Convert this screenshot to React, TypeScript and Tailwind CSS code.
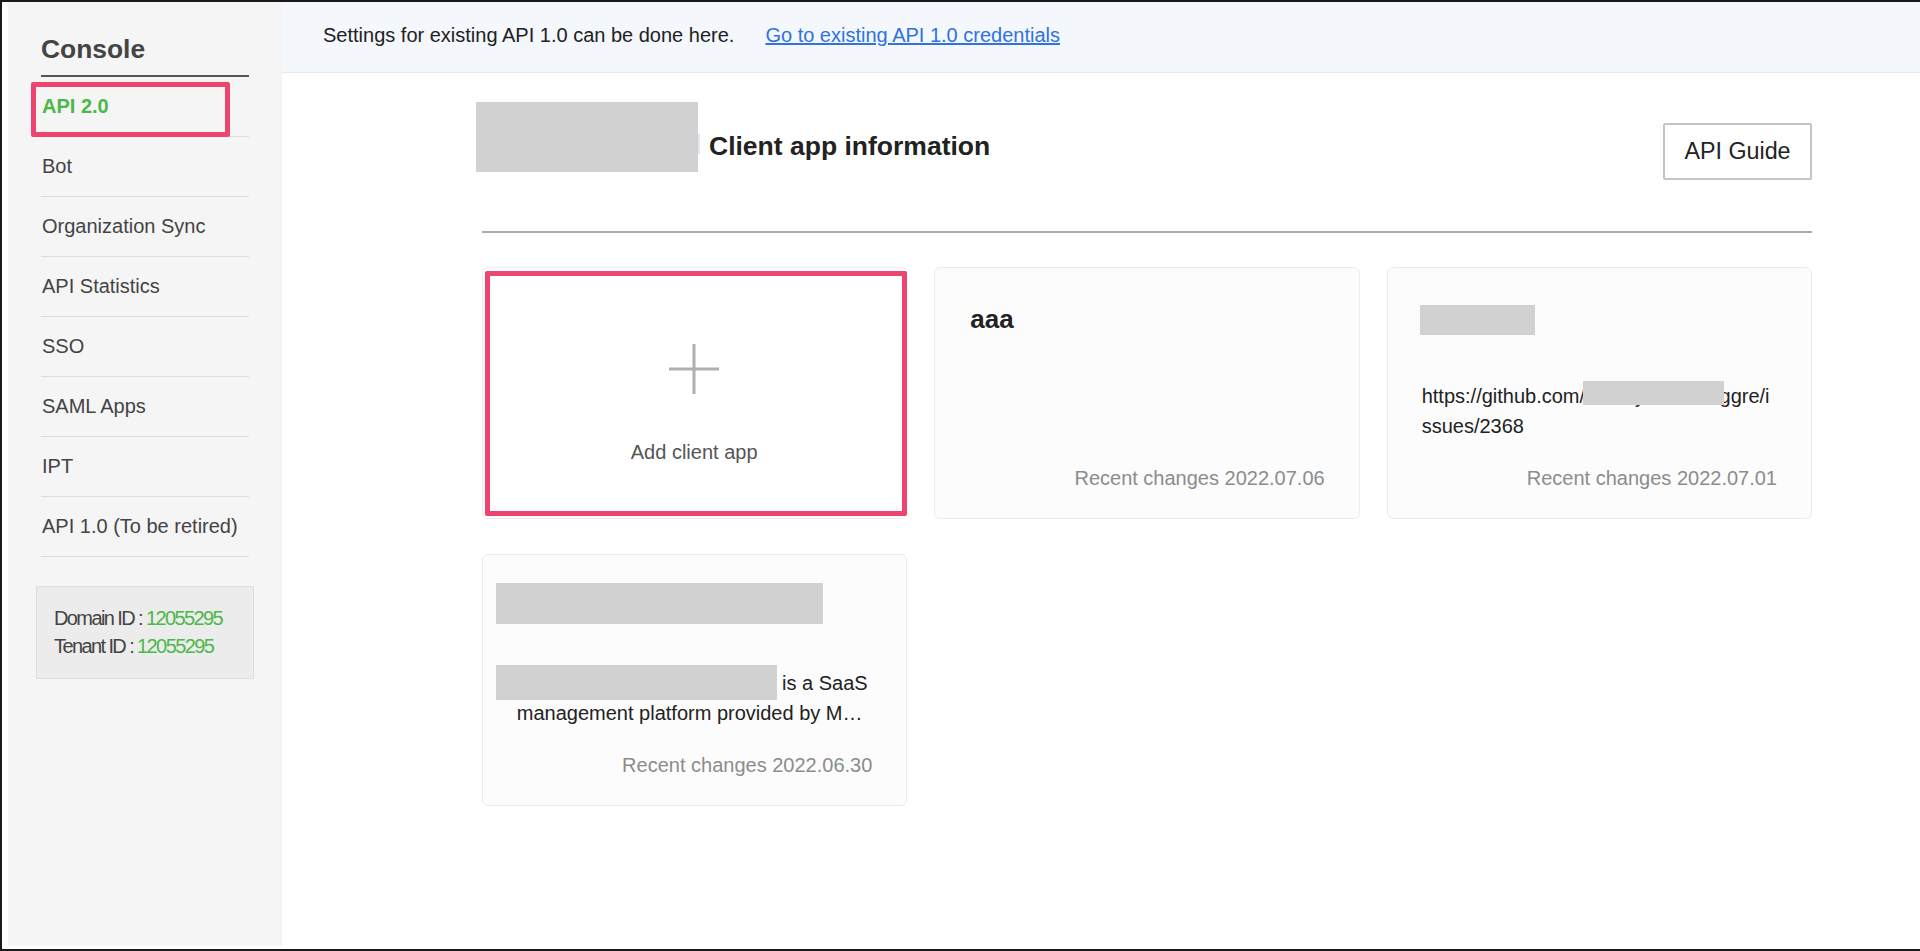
const font = "font-['Liberation_Sans',Arial,sans-serif]";

const navItems = ['API 2.0', 'Bot', 'Organization Sync', 'API Statistics', 'SSO', 'SAML Apps', 'IPT', 'API 1.0 (To be retired)'];

function Sidebar() {
  return (
    <aside className="w-[274px] shrink-0 bg-[#f5f5f5] px-[33px] pt-[29px]">
      <h1 className="mb-0 border-b-2 border-[#555] pb-[7px] text-[26.4px] leading-[37px] font-bold text-[#444]">Console</h1>
      <ul>
        {navItems.map((item, i) => (
          <li key={item} className={`relative h-[60px] border-b border-[#dcdcdc] pt-[18px] pl-[1px] text-[20px] leading-[23px] ${i === 0 ? 'font-bold text-[#4cb848]' : 'text-[#444]'}`}>
            {item}
            {i === 0 && <span className="absolute top-[5px] left-[-10px] h-[55px] w-[199px] rounded-[2px] border-[5px] border-[#ed4570]" />}
          </li>
        ))}
      </ul>
      <div className="mt-[29px] -mx-[5px] h-[93px] border border-[#dedede] bg-[#ececec] px-[17px] py-[17px] text-[20px] leading-[28px] tracking-[-1.6px] text-[#444]">
        <p>Domain ID : <span className="text-[#4cb848]">12055295</span></p>
        <p>Tenant ID : <span className="text-[#4cb848]">12055295</span></p>
      </div>
    </aside>
  );
}

function AppCard({ name, children, changed }: { name: React.ReactNode; children?: React.ReactNode; changed: string }) {
  return (
    <div className="relative h-[252px] rounded-[6px] border border-[#ececec] bg-[#fcfcfc]">
      {name}
      {children}
      <p className="absolute right-[34px] top-[195px] text-[20px] leading-[30px] text-[#8c8c8c]">Recent changes {changed}</p>
    </div>
  );
}

export default function App() {
  return (
    <div className={`${font} flex h-[951px] w-[1920px] overflow-hidden border-t-2 border-b-2 border-l-2 border-[#1a1a1a] bg-white pb-[3px] pl-[6px]`}>
      <Sidebar />
      <main className="min-w-0 flex-1">
        <div className="flex h-[71px] items-center border-b border-[#e3e8ee] bg-[#f4f7fb] pb-[4px] pl-[41px] text-[20px] text-[#222]">
          <span>Settings for existing API 1.0 can be done here.</span>
          <a className="ml-[31px] text-[#2f72e4] underline">Go to existing API 1.0 credentials</a>
        </div>
        <div className="pl-[200px] pr-[108px]">
          <div className="flex h-[160px] border-b-2 border-[#aaa]">
            <div className="mt-[29px] -ml-[6px] h-[70px] w-[222px] bg-[#d1d1d1]" />
            {/* sliver of the icon left showing next to the redaction */}
            <div className="mt-[61px] h-[20px] w-[2px] bg-[#dde7f5]" />
            <h2 className="mt-[55px] ml-[9px] text-[26.5px] leading-[36px] font-bold text-[#222]">Client app information</h2>
            <button className="mt-[50px] ml-auto h-[57px] w-[149px] rounded-[2px] border-2 border-[#c4c4c4] bg-white text-[23.3px] text-[#222]">API Guide</button>
          </div>
          <div className="mt-[34px] grid grid-cols-3 gap-x-[27px] gap-y-[35px]">
            <div className="relative flex h-[252px] flex-col items-center rounded-[6px] border border-[#ececec] bg-white pr-[1px]">
              <span className="absolute top-[3px] right-[-1px] bottom-[2px] left-[2px] rounded-[2px] border-[5px] border-[#ed4570]" />
              <svg className="mt-[76px]" width="50" height="50" viewBox="0 0 50 50" fill="none" stroke="#b0b0b0" strokeWidth="3">
                <path d="M25 0V50M0 25H50" />
              </svg>
              <p className="mt-[43px] text-[20px] leading-[30px] text-[#555]">Add client app</p>
            </div>
            <AppCard changed="2022.07.06" name={<h3 className="pt-[33px] pl-[35px] text-[26px] leading-[36px] font-bold text-[#222]">aaa</h3>} />
            <AppCard changed="2022.07.01" name={<div className="mt-[37px] ml-[32px] h-[30px] w-[115px] bg-[#d1d1d1]" />}>
              <p className="mt-[46px] px-[34px] text-[20px] leading-[30px] break-all text-[#222]">https://github.com/xxxxxyxxxxxxxiggre/issues/2368</p>
              <span className="absolute top-[113px] left-[195px] h-[24px] w-[141px] bg-[#d1d1d1]" />
            </AppCard>
            <AppCard changed="2022.06.30" name={<div className="mt-[28px] ml-[13px] h-[41px] w-[327px] bg-[#d1d1d1]" />}>
              <div className="mt-[41px] flex flex-col items-center text-[20px] leading-[30px] text-[#222]">
                <p className="flex h-[33px] w-full items-start pl-[13px]"><span className="mr-[5px] h-[35px] w-[281px] bg-[#d1d1d1]" /><span className="mt-[3px]">is a SaaS</span></p>
                <p className="pr-[10px]">management platform provided by M…</p>
              </div>
            </AppCard>
          </div>
        </div>
      </main>
    </div>
  );
}
